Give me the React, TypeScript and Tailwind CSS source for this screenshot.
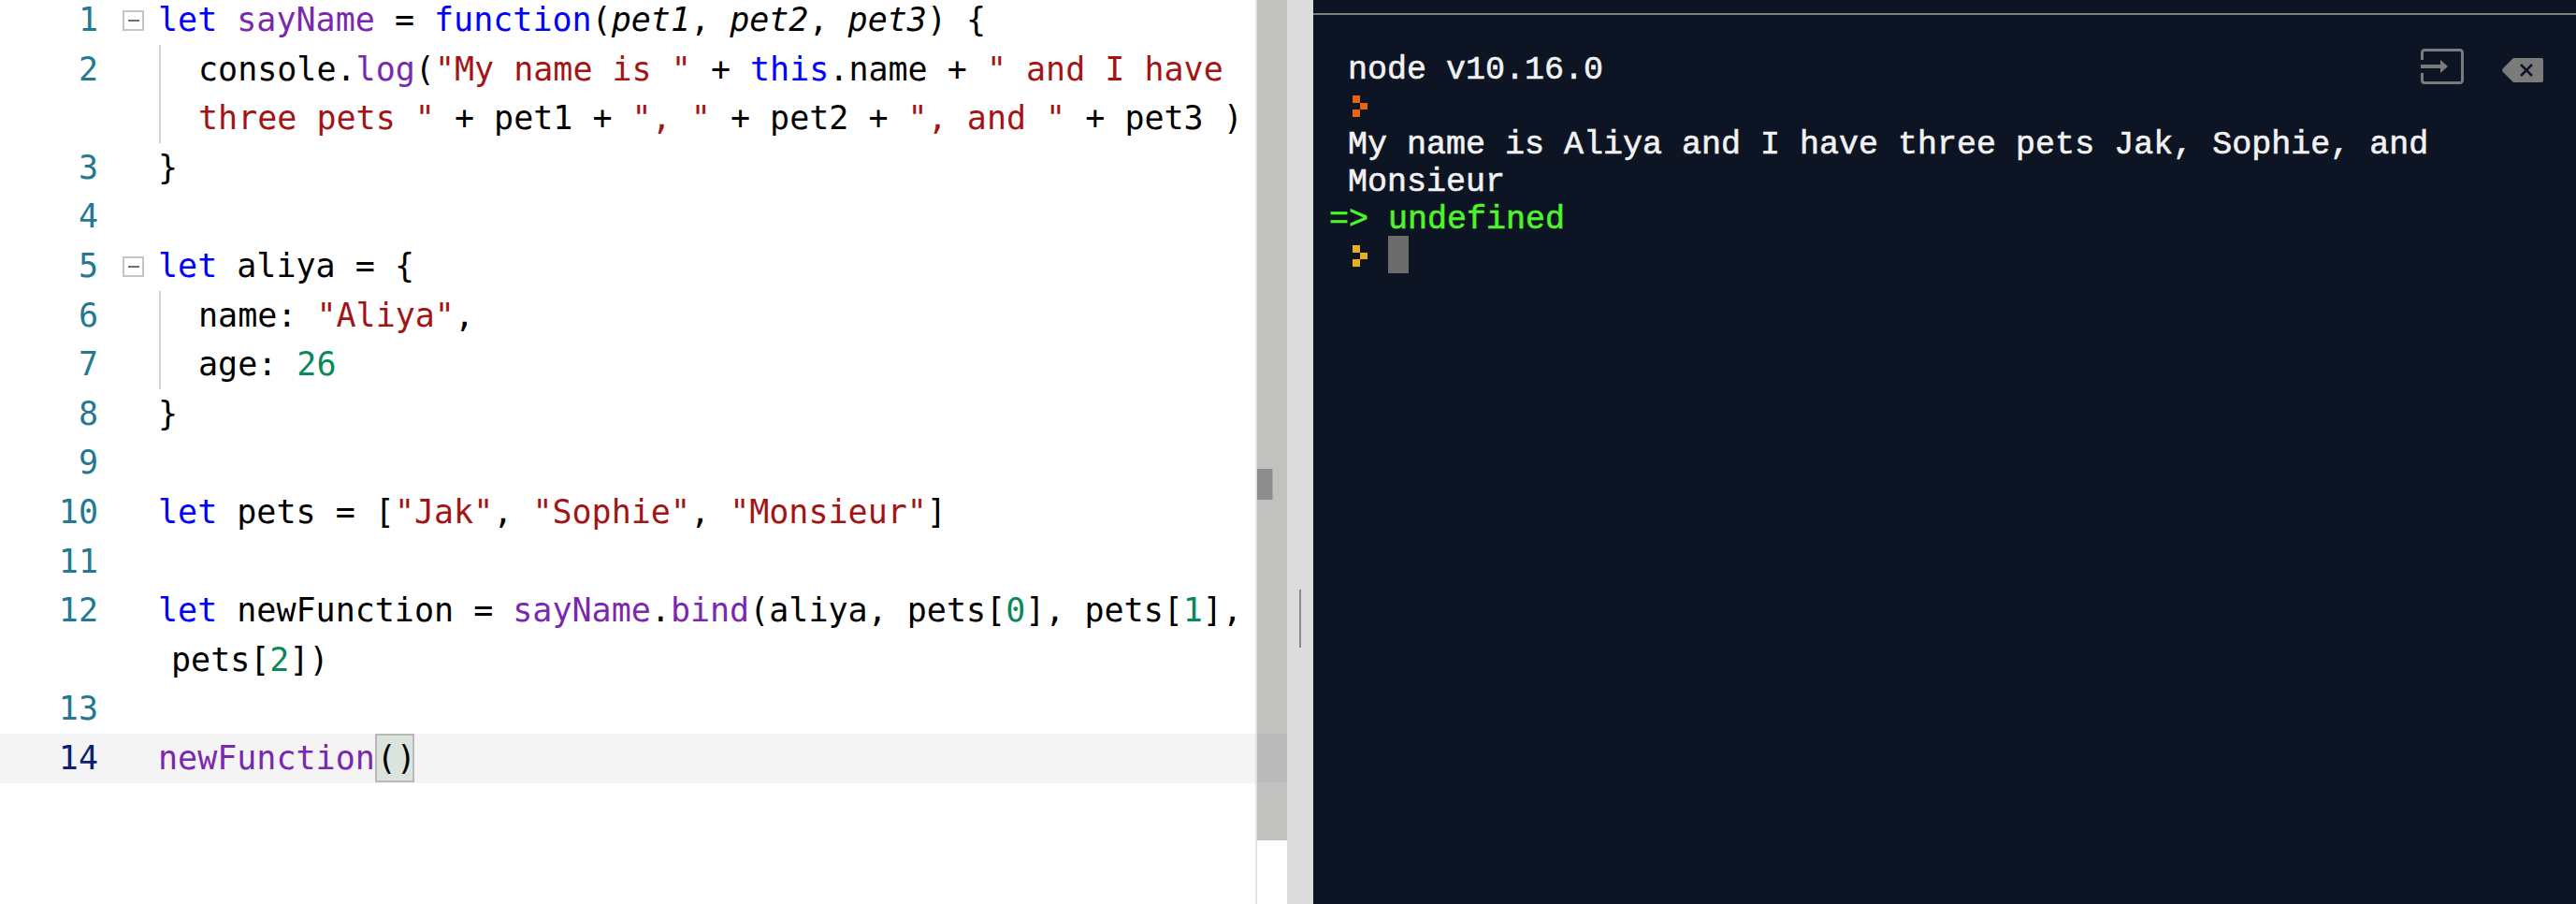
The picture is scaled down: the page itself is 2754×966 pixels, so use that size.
import React from "react";

const mono = "font-['DejaVu_Sans_Mono',monospace]";

const Kw = ({ children }: { children: React.ReactNode }) => <span className="text-[#0000ff]">{children}</span>;
const Def = ({ children }: { children: React.ReactNode }) => <span className="text-[#7a28ae]">{children}</span>;
const Str = ({ children }: { children: React.ReactNode }) => <span className="text-[#a31515]">{children}</span>;
const Num = ({ children }: { children: React.ReactNode }) => <span className="text-[#09885a]">{children}</span>;
const Em = ({ children }: { children: React.ReactNode }) => <span className="italic">{children}</span>;

type Row = { n?: number; fold?: boolean; guide?: boolean; active?: boolean; wrapIndent?: boolean; code?: React.ReactNode };

const rows: Row[] = [
  {
    n: 1,
    fold: true,
    code: (
      <>
        <Kw>let</Kw> <Def>sayName</Def> = <Kw>function</Kw>(<Em>pet1</Em>, <Em>pet2</Em>, <Em>pet3</Em>) {"{"}
      </>
    ),
  },
  {
    n: 2,
    guide: true,
    code: (
      <>
        console.<Def>log</Def>(<Str>"My name is "</Str> + <Kw>this</Kw>.name + <Str>" and I have</Str>
      </>
    ),
  },
  {
    guide: true,
    code: (
      <>
        <Str>three pets "</Str> + pet1 + <Str>", "</Str> + pet2 + <Str>", and "</Str> + pet3 )
      </>
    ),
  },
  { n: 3, code: "}" },
  { n: 4 },
  {
    n: 5,
    fold: true,
    code: (
      <>
        <Kw>let</Kw> aliya = {"{"}
      </>
    ),
  },
  {
    n: 6,
    guide: true,
    code: (
      <>
        name: <Str>"Aliya"</Str>,
      </>
    ),
  },
  {
    n: 7,
    guide: true,
    code: (
      <>
        age: <Num>26</Num>
      </>
    ),
  },
  { n: 8, code: "}" },
  { n: 9 },
  {
    n: 10,
    code: (
      <>
        <Kw>let</Kw> pets = [<Str>"Jak"</Str>, <Str>"Sophie"</Str>, <Str>"Monsieur"</Str>]
      </>
    ),
  },
  { n: 11 },
  {
    n: 12,
    code: (
      <>
        <Kw>let</Kw> newFunction = <Def>sayName</Def>.<Def>bind</Def>(aliya, pets[<Num>0</Num>], pets[<Num>1</Num>],
      </>
    ),
  },
  {
    wrapIndent: true,
    code: (
      <>
        pets[<Num>2</Num>])
      </>
    ),
  },
  { n: 13 },
  {
    n: 14,
    active: true,
    code: (
      <>
        <Def>newFunction</Def>
        <span className="inline-block h-[52px] w-[42px] border-2 border-[#b9b9b9] bg-[#dbe4dc] align-top leading-[48px]">()</span>
      </>
    ),
  },
];

const FoldIcon = () => (
  <div className="flex h-[22px] w-[23px] items-center justify-center border-2 border-[#c4c4c4] bg-white">
    <div className="h-[2px] w-[12px] bg-[#707070]" />
  </div>
);

const CodeRow = ({ row }: { row: Row }) => (
  <div className={`flex h-[52.6px] ${mono} text-[35px] leading-[52px] whitespace-pre text-black ${row.active ? "bg-[#f4f4f5]" : ""}`}>
    <div className={`w-[105px] shrink-0 text-right ${row.active ? "text-[#0b216f]" : "text-[#237893]"}`}>{row.n}</div>
    <div className="flex w-[63px] shrink-0 justify-end pr-[14px] pt-[16px]">{row.fold && <FoldIcon />}</div>
    {row.guide ? (
      <div className="ml-[2px] border-l-2 border-[#d4d4d4] pl-[40px]">{row.code}</div>
    ) : (
      <div className={row.wrapIndent ? "pl-[15px]" : "pl-[1px]"}>{row.code}</div>
    )}
  </div>
);

const Prompt = ({ color }: { color: string }) => (
  <svg width="16" height="23" viewBox="0 0 16 23" className={color}>
    <rect x="0" y="0" width="8" height="8" fill="currentColor" />
    <rect x="8" y="8" width="8" height="7" fill="currentColor" />
    <rect x="0" y="15" width="8" height="8" fill="currentColor" />
  </svg>
);

export default function App() {
  return (
    <div className="flex h-[966px] w-[2754px] overflow-hidden bg-white">
      {/* Editor */}
      <div className="w-[1342px] shrink-0 overflow-hidden">
        <div className="-mt-[5px]">
          {rows.map((row, i) => (
            <CodeRow key={i} row={row} />
          ))}
        </div>
      </div>

      {/* Scrollbar */}
      <div className="flex h-full w-[34px] shrink-0 flex-col border-l-2 border-[#e2e2e2]">
        <div className="relative h-[898px] bg-[#c1c1bf]">
          <div className="absolute top-[501px] left-0 h-[33px] w-[17px] border-r border-[#a8a8a8] bg-[#8d8d8d]" />
          <div className="absolute top-[784px] left-0 h-[52px] w-full bg-[#bababa]" />
        </div>
      </div>

      {/* Divider */}
      <div className="relative h-full w-[28px] shrink-0 bg-[#dcdcdc]">
        <div className="absolute top-[630px] left-[13px] h-[62px] w-[2px] bg-[#8a8a8a]" />
      </div>

      {/* Console */}
      <div className="relative flex-1 bg-[#0d1423]">
        <div className="h-[16px] border-b-2 border-[#7f7f7f]" />
        <div className="pt-[36px] pl-[16px] font-['Liberation_Mono',monospace] text-[35px] leading-[40px] whitespace-pre text-[#f2f2f2] [-webkit-text-stroke:0.6px_currentColor]">
          <div className="h-[40px] pt-[3px] pl-[21px]">node v10.16.0</div>
          <div className="flex h-[40px] pt-[10px] pl-[26px]">
            <Prompt color="text-[#e8650f]" />
          </div>
          <div className="h-[40px] pt-[3px] pl-[21px]">My name is Aliya and I have three pets Jak, Sophie, and</div>
          <div className="h-[40px] pt-[3px] pl-[21px]">Monsieur</div>
          <div className="h-[40px] pt-[3px] pl-[1px] text-[#4ff52a]">{"=> undefined"}</div>
          <div className="flex h-[40px] pl-[26px]">
            <div className="pt-[10px]">
              <Prompt color="text-[#e8b020]" />
            </div>
            <div className="ml-[22px] h-[40px] w-[22px] bg-[#6b6b6b]" />
          </div>
        </div>

        {/* Console actions */}
        <div className="absolute top-[52px] left-[1184px] flex items-start gap-[41px]">
          <svg width="46" height="38" viewBox="0 0 46 38" fill="none" stroke="#7b7b7b" strokeWidth="3">
            <path d="M1.5 12V4a2.5 2.5 0 0 1 2.5-2.5h38A2.5 2.5 0 0 1 44.5 4v30a2.5 2.5 0 0 1-2.5 2.5H4A2.5 2.5 0 0 1 1.5 34v-8" />
            <path d="M0 19h21" strokeWidth="4" />
            <path d="M21 12l8 7-8 7z" fill="#7b7b7b" stroke="none" />
          </svg>
          <svg width="44" height="26" viewBox="0 0 44 26" className="mt-[10px]">
            <path d="M12 0h30a2 2 0 0 1 2 2v22a2 2 0 0 1-2 2H12L1 15a3 3 0 0 1 0-4z" fill="#7b7b7b" />
            <path d="M20 7l12 12M32 7L20 19" stroke="#0d1423" strokeWidth="2.5" fill="none" />
          </svg>
        </div>
      </div>
    </div>
  );
}
